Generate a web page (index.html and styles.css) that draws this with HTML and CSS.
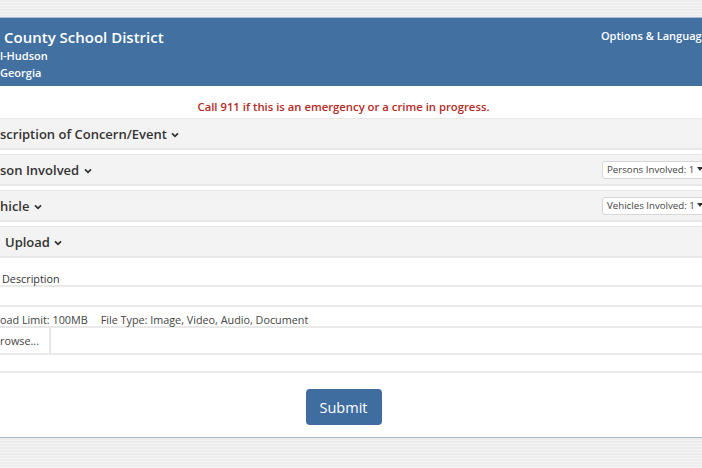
FILE: index.html
```html
<!DOCTYPE html>
<html lang="en">
<head>
    <meta charset="UTF-8">
    <meta name="viewport" content="width=device-width, initial-scale=1.0">
    <title>Report a Concern</title>
    <link rel="stylesheet" href="styles.css">
</head>
<body>

    <div class="page">
        <!-- header, cropped at the left edge like the screenshot -->
        <div class="header">
            <div class="district">
                <div class="district-name">County School District</div>
                <div class="district-line">l-Hudson</div>
                <div class="district-line">Georgia</div>
            </div>
            <div class="options">Options &amp; Language</div>
        </div>

        <div class="content">
            <p class="emergency">Call 911 if this is an emergency or a crime in progress.</p>

            <div class="panel">
                <span class="panel-title">scription of Concern/Event
                    <svg class="chev" width="8" height="6" viewBox="0 0 8 6"><polyline points="1,1.3 4,4.3 7,1.3" fill="none" stroke="#333" stroke-width="1.8"/></svg>
                </span>
            </div>

            <div class="panel">
                <span class="panel-title">son Involved
                    <svg class="chev" width="8" height="6" viewBox="0 0 8 6"><polyline points="1,1.3 4,4.3 7,1.3" fill="none" stroke="#333" stroke-width="1.8"/></svg>
                </span>
                <div class="count-select">Persons Involved: 1 <span class="caret"></span></div>
            </div>

            <div class="panel">
                <span class="panel-title">hicle
                    <svg class="chev" width="8" height="6" viewBox="0 0 8 6"><polyline points="1,1.3 4,4.3 7,1.3" fill="none" stroke="#333" stroke-width="1.8"/></svg>
                </span>
                <div class="count-select">Vehicles Involved: 1 <span class="caret"></span></div>
            </div>

            <div class="panel">
                <span class="panel-title upload-title">Upload
                    <svg class="chev" width="8" height="6" viewBox="0 0 8 6"><polyline points="1,1.3 4,4.3 7,1.3" fill="none" stroke="#333" stroke-width="1.8"/></svg>
                </span>
            </div>

            <div class="upload">
                <div class="field-label">Description</div>
                <div class="field-input"></div>
                <div class="upload-info">
                    <span>oad Limit: 100MB</span>
                    <span>File Type: Image, Video, Audio, Document</span>
                </div>
                <div class="file-row">
                    <div class="browse">rowse...</div>
                    <div class="file-name"></div>
                </div>
                <div class="field-input blank"></div>
            </div>

            <div class="actions">
                <button class="submit">Submit</button>
            </div>
        </div>
    </div>

</body>
</html>
```

FILE: styles.css
```css
html, body {
    margin: 0;
    overflow: hidden;
}
body {
    font-family: "Open Sans", Arial, sans-serif;
    background-color: #ededed;
    background-image: repeating-linear-gradient(0deg, rgba(255,255,255,0.35) 0, rgba(255,255,255,0.35) 1px, transparent 1px, transparent 3px);
    height: 468px;
}
/* the card runs past both edges of the window */
.page {
    margin-top: 17px;
    margin-left: -35px;
    width: 757px;
    background: #ffffff;
    border-top: 1px solid #a9bdd3;
    border-bottom: 1px solid #a9bdd3;
}
.header {
    background-color: #4170a1;
    color: #ffffff;
    height: 68px;
    display: flex;
    justify-content: space-between;
    padding: 0 14px 0 35px;
    box-sizing: border-box;
}
.district {
    padding-top: 9px;
}
.district-name {
    font-size: 15px;
    font-weight: 600;
    line-height: 20px;
    padding-left: 4px;
}
.district-line {
    font-size: 11px;
    font-weight: 600;
    line-height: 17px;
}
.options {
    font-size: 11px;
    font-weight: 600;
    padding-top: 10px;
    white-space: nowrap;
}
.content {
    padding: 11px 0 12px 0;
}
.emergency {
    color: #b52a26;
    font-size: 11.3px;
    font-weight: 600;
    text-align: center;
    line-height: 20px;
    margin: 0 0 1px 0;
}
.panel {
    background-color: #f3f3f3;
    border: 1px solid #e7e7e7;
    border-bottom-width: 2px;
    height: 32px;
    box-sizing: border-box;
    margin-bottom: 4px;
    padding: 0 8px 0 34px;
    display: flex;
    align-items: center;
    justify-content: space-between;
}
.panel-title {
    font-size: 13px;
    font-weight: 600;
    color: #333;
    white-space: nowrap;
}
.upload-title {
    padding-left: 5px;
}
.chev {
    margin-left: 1px;
    vertical-align: 1px;
}
.count-select {
    background: #ffffff;
    border: 1px solid #d6d6d6;
    border-radius: 3px;
    font-size: 9.7px;
    color: #444;
    height: 18px;
    line-height: 16px;
    box-sizing: border-box;
    padding: 0 4px;
    width: 111px;
    white-space: nowrap;
}
.caret {
    display: inline-block;
    width: 0;
    height: 0;
    border-left: 3px solid transparent;
    border-right: 3px solid transparent;
    border-top: 4px solid #333;
    vertical-align: 2px;
}
.upload {
    margin-top: -3px;
    font-size: 10.8px;
    color: #444;
}
.field-label {
    height: 28px;
    line-height: 14px;
    padding: 13px 0 0 37px;
    box-sizing: border-box;
    border-bottom: 2px solid #e9e9e9;
    color: #333;
}
.field-input {
    height: 20px;
    box-sizing: border-box;
    border-bottom: 2px solid #e9e9e9;
}
.field-input.blank {
    height: 18px;
}
.upload-info {
    height: 21px;
    box-sizing: border-box;
    padding: 5px 0 0 35px;
    border-bottom: 2px solid #e9e9e9;
    display: flex;
    gap: 13px;
}
.file-row {
    display: flex;
    height: 27px;
    box-sizing: border-box;
    border-bottom: 2px solid #e9e9e9;
}
.browse {
    width: 86px;
    padding-left: 35px;
    box-sizing: border-box;
    border-right: 2px solid #e6e6e6;
    line-height: 25px;
}
.file-name {
    flex: 1;
}
.actions {
    text-align: center;
    padding-top: 16px;
}
.submit {
    background-color: #3f6d9f;
    color: #ffffff;
    font-family: "Open Sans", Arial, sans-serif;
    font-size: 14.5px;
    border: none;
    border-radius: 4px;
    width: 76px;
    height: 36px;
    padding: 0;
}
```
